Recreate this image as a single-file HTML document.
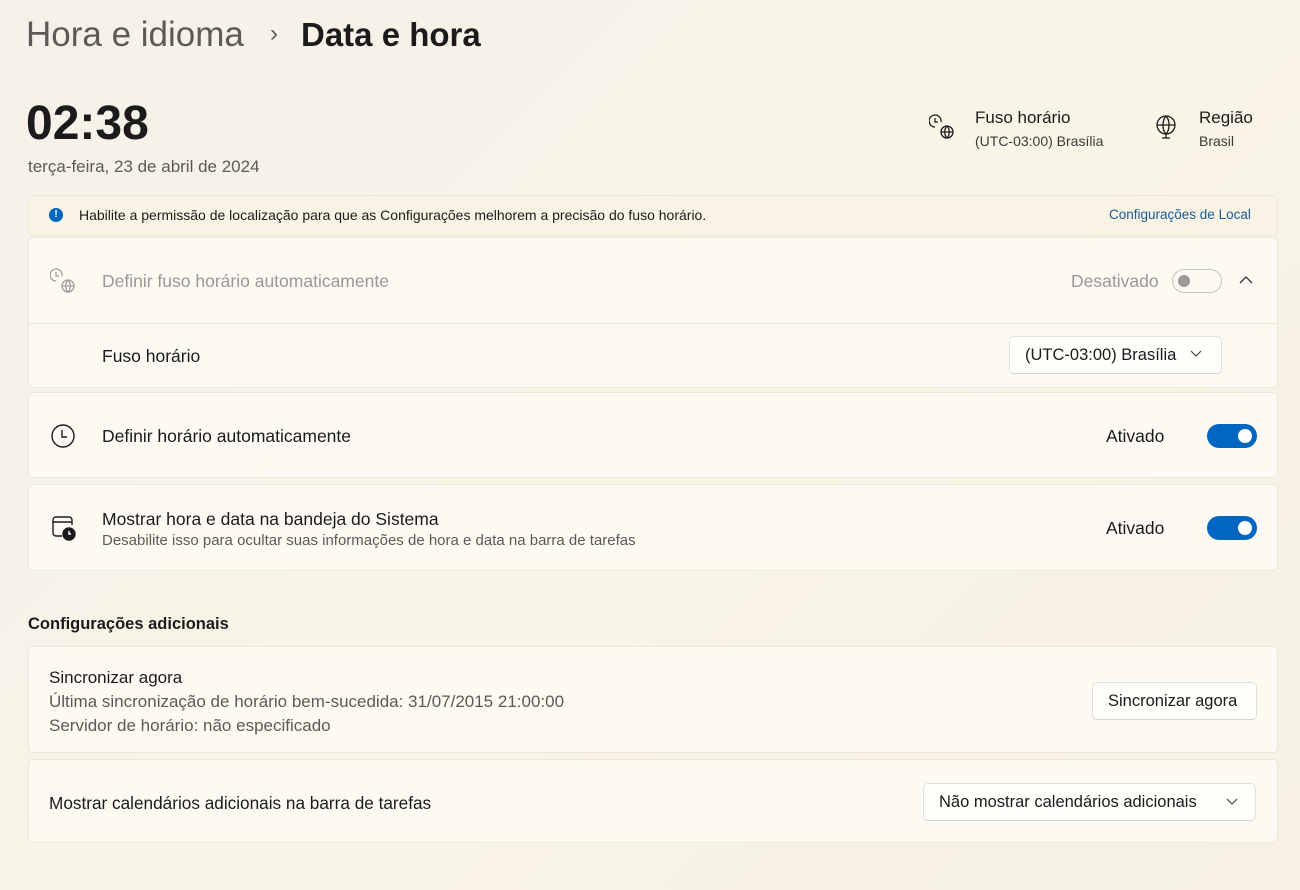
<!DOCTYPE html>
<html><head><meta charset="utf-8"><style>
*{box-sizing:border-box;margin:0;padding:0}
body{width:1300px;height:890px;overflow:hidden;background:linear-gradient(135deg,#f5f1ea 0%,#f8f4e6 50%,#f6f1e4 100%);font-family:"Liberation Sans",sans-serif;color:#1b1b1b;position:relative}
.a{position:absolute;white-space:nowrap}
.card{position:absolute;left:28px;width:1250px;background:#fcfaf2;border:1px solid #ece7d8;border-radius:5px}
.tog{position:absolute;width:50px;height:24px;border-radius:12px;background:#0067c0}
.tog::after{content:"";position:absolute;right:5px;top:5px;width:14px;height:14px;border-radius:50%;background:#fff}
.btn{position:absolute;background:#fefefb;border:1px solid #e3e0d6;border-bottom-color:#d4d1c8;border-radius:5px;font-size:16.5px;padding-left:15px;line-height:36px}
.t{font-size:17.5px}
</style></head><body>
<div class="a" style="left:26px;top:15px;font-size:35px;color:#5d5a55">Hora e idioma</div>
<div class="a" style="left:270px;top:20px;font-size:24px;color:#5d5a55">›</div>
<div class="a" style="left:301px;top:16px;font-size:33px;font-weight:bold;color:#1b1b1b">Data e hora</div>
<div class="a" style="left:26px;top:96px;font-size:48px;font-weight:bold;color:#1b1b1b">02:38</div>
<div class="a" style="left:28px;top:157px;font-size:17px;color:#5d5a55">terça-feira, 23 de abril de 2024</div>

<svg class="a" style="left:929px;top:113px" width="28" height="28" viewBox="0 0 28 28" fill="none" stroke="#1b1b1b" stroke-width="1.3"><path d="M12 9a6 6 0 1 0-6 5"/><path d="M6 5v4h3"/><circle cx="18" cy="19" r="6"/><path d="M12 19h12M18 13c-3 3-3 9 0 12M18 13c3 3 3 9 0 12"/></svg>
<div class="a" style="left:975px;top:108px;font-size:17px;color:#1b1b1b">Fuso horário</div>
<div class="a" style="left:975px;top:133px;font-size:14px;color:#3a3a3a">(UTC-03:00) Brasília</div>
<svg class="a" style="left:1153px;top:113px" width="26" height="28" viewBox="0 0 26 28" fill="none" stroke="#1b1b1b" stroke-width="1.3"><circle cx="13" cy="12" r="9"/><path d="M4 12h18M13 3c-4 4-4 14 0 18M13 3c4 4 4 14 0 18M13 21v4M9 25h8"/></svg>
<div class="a" style="left:1199px;top:108px;font-size:17px;color:#1b1b1b">Região</div>
<div class="a" style="left:1199px;top:133px;font-size:14px;color:#3a3a3a">Brasil</div>

<div class="card" style="top:195px;height:41px;background:#f8f3e4"></div>
<div class="a" style="left:49px;top:208px;width:14px;height:14px;border-radius:50%;background:#0067c0;color:#fff;font-size:10px;text-align:center;line-height:14px;font-weight:bold">!</div>
<div class="a" style="left:79px;top:207px;font-size:14px">Habilite a permissão de localização para que as Configurações melhorem a precisão do fuso horário.</div>
<div class="a" style="left:1109px;top:207px;font-size:13.5px;color:#1a5a96">Configurações de Local</div>

<div class="card" style="top:237px;height:151px"></div>
<div class="a" style="left:29px;top:323px;width:1248px;height:1px;background:#ece7d8"></div>
<svg class="a" style="left:50px;top:267px" width="28" height="28" viewBox="0 0 28 28" fill="none" stroke="#a09d98" stroke-width="1.3"><path d="M12 9a6 6 0 1 0-6 5"/><path d="M6 5v4h3"/><circle cx="18" cy="19" r="6"/><path d="M12 19h12M18 13c-3 3-3 9 0 12M18 13c3 3 3 9 0 12"/></svg>
<div class="a t" style="left:102px;top:271px;color:#9a9894">Definir fuso horário automaticamente</div>
<div class="a t" style="left:1071px;top:271px;color:#9a9894">Desativado</div>
<div class="a" style="left:1172px;top:269px;width:50px;height:24px;border-radius:12px;border:1px solid #c6c3bd"><div style="position:absolute;left:5px;top:5px;width:12px;height:12px;border-radius:50%;background:#9c9a96"></div></div>
<svg class="a" style="left:1238px;top:274px" width="16" height="12" viewBox="0 0 16 12" fill="none" stroke="#333" stroke-width="1.3"><path d="M2 9l6-6 6 6"/></svg>
<div class="a t" style="left:102px;top:346px">Fuso horário</div>
<div class="btn" style="left:1009px;top:336px;width:213px;height:38px">(UTC-03:00) Brasília</div>
<svg class="a" style="left:1190px;top:350px" width="12" height="8" viewBox="0 0 12 8" fill="none" stroke="#444" stroke-width="1.2"><path d="M1 1l5 5 5-5"/></svg>

<div class="card" style="top:392px;height:86px"></div>
<svg class="a" style="left:50px;top:423px" width="26" height="26" viewBox="0 0 26 26" fill="none" stroke="#1b1b1b" stroke-width="1.4"><circle cx="13" cy="13" r="11"/><path d="M12 7v7h5"/></svg>
<div class="a t" style="left:102px;top:426px">Definir horário automaticamente</div>
<div class="a t" style="left:1106px;top:426px">Ativado</div>
<div class="tog" style="left:1207px;top:424px"></div>

<div class="card" style="top:484px;height:87px"></div>
<svg class="a" style="left:51px;top:515px" width="28" height="28" viewBox="0 0 28 28" fill="none" stroke="#1b1b1b" stroke-width="1.4"><path d="M11 21H5a3 3 0 0 1-3-3V5a3 3 0 0 1 3-3h13a3 3 0 0 1 3 3v5M2 7h19"/><circle cx="18" cy="19" r="6" fill="#1b1b1b"/><path d="M18 16v3h2" stroke="#fff"/></svg>
<div class="a t" style="left:102px;top:509px">Mostrar hora e data na bandeja do Sistema</div>
<div class="a" style="left:102px;top:532px;font-size:15px;color:#5d5a55">Desabilite isso para ocultar suas informações de hora e data na barra de tarefas</div>
<div class="a t" style="left:1106px;top:518px">Ativado</div>
<div class="tog" style="left:1207px;top:516px"></div>

<div class="a" style="left:28px;top:615px;font-size:16.5px;font-weight:bold">Configurações adicionais</div>
<div class="card" style="top:646px;height:107px"></div>
<div class="a" style="left:49px;top:668px;font-size:17px">Sincronizar agora</div>
<div class="a" style="left:49px;top:692px;font-size:17px;color:#5d5a55">Última sincronização de horário bem-sucedida: 31/07/2015 21:00:00</div>
<div class="a" style="left:49px;top:716px;font-size:17px;color:#5d5a55">Servidor de horário: não especificado</div>
<div class="btn" style="left:1092px;top:682px;width:165px;height:38px">Sincronizar agora</div>

<div class="card" style="top:759px;height:84px"></div>
<div class="a" style="left:49px;top:793px;font-size:17.2px">Mostrar calendários adicionais na barra de tarefas</div>
<div class="btn" style="left:923px;top:783px;width:333px;height:38px">Não mostrar calendários adicionais</div>
<svg class="a" style="left:1226px;top:798px" width="12" height="8" viewBox="0 0 12 8" fill="none" stroke="#444" stroke-width="1.2"><path d="M1 1l5 5 5-5"/></svg>
</body></html>
